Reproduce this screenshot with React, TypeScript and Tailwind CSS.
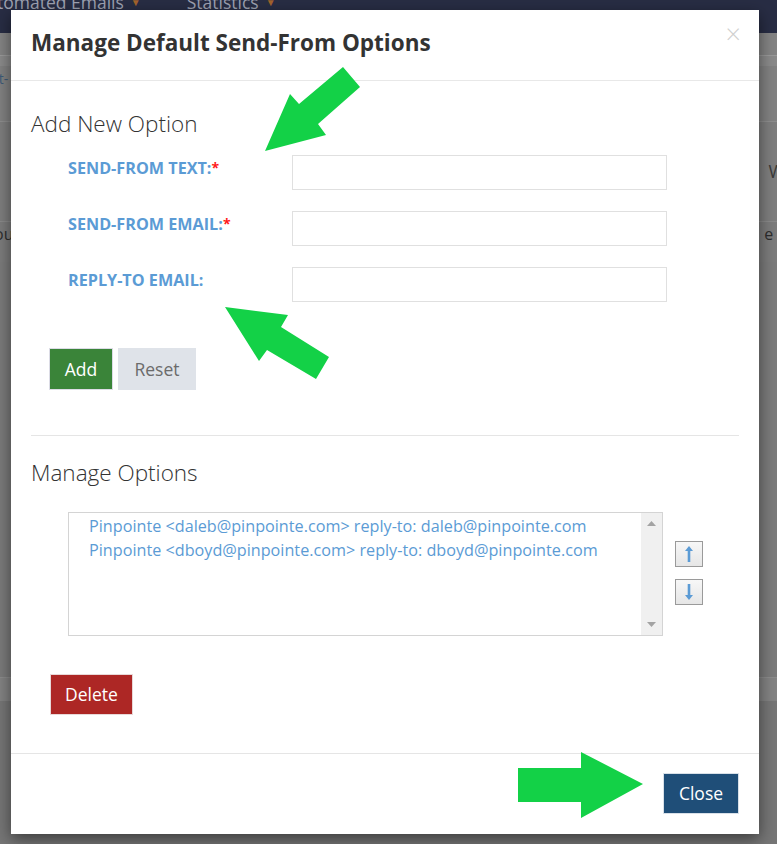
import { useState } from "react";

const options = [
  "Pinpointe <daleb@pinpointe.com> reply-to: daleb@pinpointe.com",
  "Pinpointe <dboyd@pinpointe.com> reply-to: dboyd@pinpointe.com",
];

function Field({ label, required }: { label: string; required?: boolean }) {
  return (
    <div className="flex h-[35px]">
      <div className="w-[261px] pl-[37px] pt-[3px] text-[16.2px] leading-[20px] font-bold text-[#5b9bd5]">
        {label}
        {required && <span className="text-[14px] align-top text-[#ff1a1a]">*</span>}
      </div>
      <input className="w-[375px] h-[35px] border border-[#e0e0e0] bg-white outline-none px-2" />
    </div>
  );
}

function MoveButton({ dir }: { dir: "up" | "down" }) {
  return (
    <button className="w-[28px] h-[26px] border border-[#9a9a9a] bg-gradient-to-b from-[#f7f7f7] to-[#e6e6e6] flex items-center justify-center">
      <svg width="12" height="18" viewBox="0 0 12 18">
        {dir === "up" ? (
          <path d="M6 1 L10 6 H7.3 V17 H4.7 V6 H2 Z" fill="#5b9bd5" />
        ) : (
          <path d="M6 17 L10 12 H7.3 V1 H4.7 V12 H2 Z" fill="#5b9bd5" />
        )}
      </svg>
    </button>
  );
}

export default function App() {
  const [selected] = useState<number | null>(null);

  return (
    <div
      className="relative h-[844px] w-full overflow-hidden bg-[#7c7c7c]"
      style={{ fontFamily: '"Open Sans", "Noto Sans", sans-serif' }}
    >
      {/* Page behind the overlay */}
      <div className="h-[33px] bg-[#282d44] flex text-[17.5px] leading-[20px] text-[#9ea2b2] overflow-hidden">
        <div className="-mt-[8px] -ml-[3px] flex items-center gap-[7px] h-[20px]">
          <span>tomated Emails</span>
          <span className="text-[10px] text-[#a4632c]">▼</span>
        </div>
        <div className="-mt-[8px] ml-[46px] flex items-center gap-[7px] h-[20px]">
          <span>Statistics</span>
          <span className="text-[10px] text-[#a4632c]">▼</span>
        </div>
      </div>
      <div className="h-[22px] bg-[#848484]" />
      <div className="h-[11px] bg-[#8a8a8a] border-t border-[#9a9a9a]" />
      <div className="h-[56px] bg-[#828282] border-b border-[#8e8e8e] text-[14px] text-[#3e5a78] pt-[2px] -ml-[8px]">
        st-
      </div>
      <div className="h-[100px] bg-[#7e7e7e] border-b border-[#8a8a8a] text-[18px] text-[#3a3a3a] flex justify-end items-center -mr-[8px]">
        W
      </div>
      <div className="h-[40px] bg-[#7c7c7c] flex justify-between text-[16px] text-[#2d2d2d] -mx-[6px]">
        <span>ou</span>
        <span>
          e <span className="text-[#8a5a2a]">t</span>
        </span>
      </div>
      <div className="h-[415px] bg-[#7b7b7b]" />
      <div className="h-[24px] bg-[#838383] border-t border-[#8c8c8c]" />
      <div className="h-[143px] bg-[#767676]" />

      {/* Modal */}
      <div className="absolute top-[10px] left-[11px] w-[748px] h-[824px] bg-white flex flex-col shadow-[0_5px_15px_rgba(0,0,0,0.5)]">
        <div className="h-[71px] border-b border-[#e8e8e8] flex items-start justify-between pl-[20px] pr-[18px]">
          <h4 className="mt-[17px] text-[22.5px] leading-[32px] font-bold text-[#333333]">
            Manage Default Send-From Options
          </h4>
          <button className="mt-[9px] text-[27px] leading-[30px] text-[#cfcfcf] font-light">
            ×
          </button>
        </div>

        <div className="flex-1 px-[20px] pt-[27px]">
          <h3 className="text-[22.5px] leading-[32px] font-light text-[#333333]">Add New Option</h3>
          <div className="mt-[15px] flex flex-col gap-[21px]">
            <Field label="SEND-FROM TEXT:" required />
            <Field label="SEND-FROM EMAIL:" required />
            <Field label="REPLY-TO EMAIL:" />
          </div>
          <div className="mt-[46px] ml-[18px] flex gap-[5px]">
            <button className="w-[64px] h-[42px] bg-[#3a8439] text-white text-[17.5px] border border-[#dcdce6]">
              Add
            </button>
            <button className="w-[78px] h-[42px] bg-[#dfe3e9] text-[#6b6b6b] text-[17.5px]">
              Reset
            </button>
          </div>

          <div className="mt-[45px] border-t border-[#e5e5e5]" />

          <h3 className="mt-[21px] text-[22.5px] leading-[32px] font-light text-[#333333]">
            Manage Options
          </h3>
          <div className="mt-[23px] ml-[37px] flex">
            <div className="w-[595px] h-[124px] border border-[#d4d4d4] flex">
              <div className="flex-1 pt-[1px] pl-[20px]">
                {options.map((o, i) => (
                  <div
                    key={i}
                    className={`text-[16.2px] leading-[24px] whitespace-nowrap ${
                      selected === i ? "bg-[#cfe3f6]" : ""
                    } text-[#5b9bd5]`}
                  >
                    {o}
                  </div>
                ))}
              </div>
              <div className="w-[21px] bg-[#f0f0f0] flex flex-col items-center justify-between py-[8px]">
                <svg width="9" height="5" viewBox="0 0 9 5">
                  <path d="M0 5 L4.5 0 L9 5 Z" fill="#a3a3a3" />
                </svg>
                <svg width="9" height="5" viewBox="0 0 9 5">
                  <path d="M0 0 L4.5 5 L9 0 Z" fill="#a3a3a3" />
                </svg>
              </div>
            </div>
            <div className="ml-[12px] mt-[29px] flex flex-col gap-[12px]">
              <MoveButton dir="up" />
              <MoveButton dir="down" />
            </div>
          </div>

          <button className="mt-[38px] ml-[19px] w-[83px] h-[41px] bg-[#ad2725] text-white text-[17.5px] border border-[#e8d8d8]">
            Delete
          </button>
        </div>

        <div className="h-[81px] border-t border-[#e5e5e5] flex justify-end pr-[20px] pt-[19px]">
          <button className="w-[76px] h-[41px] bg-[#1f4e78] text-white text-[17.5px] border border-[#d8e0e8]">
            Close
          </button>
        </div>
      </div>

      {/* Annotation arrows */}
      <svg className="absolute inset-0 pointer-events-none" width="777" height="844">
        <polygon
          points="343,67 360,87 318,124 326,135 265,151 290,94 299,104"
          fill="#13d147"
        />
        <polygon
          points="225,307 288,315 281,327 329,357 316,379 267,350 259,361"
          fill="#13d147"
        />
        <polygon
          points="518,768 581,768 581,752 643,784 581,818 581,802 518,802"
          fill="#13d147"
        />
      </svg>
    </div>
  );
}
